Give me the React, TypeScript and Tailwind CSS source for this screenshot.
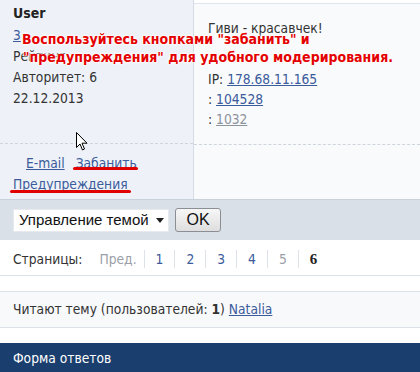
import React from "react";

const font = "font-['DejaVu_Sans_Condensed','DejaVu_Sans',sans-serif]";

const pages = ["1", "2", "3", "4", "5"];

const Cursor = () => (
  <svg width="12" height="19" viewBox="0 0 12 19" className="absolute left-[76px] top-[132px]">
    <path
      d="M0.5 0.5 L0.5 15.5 L4 12 L6.5 18 L8.5 17 L6 11.2 L11 11.2 Z"
      fill="#fff"
      stroke="#000"
      strokeWidth="1"
    />
  </svg>
);

const App = () => {
  return (
    <div className={`relative w-[420px] h-[372px] overflow-hidden bg-white text-[13.7px] text-[#333] ${font}`}>
      {/* post */}
      <div className="flex h-[200px] border-b border-[#c9d1db]">
        <div className="w-[194px] bg-[#eef2f8] border-r border-[#d5dce5] flex flex-col">
          <div className="h-[143px] px-[13px] pt-[3px] flex flex-col">
            <div className="font-bold text-[14px] leading-[20px] text-[#222]">User</div>
            <div className="leading-[21px] mt-[2px]">
              <a className="text-[#3b5b9b] underline">3</a>
            </div>
            <div className="leading-[21px]">Рейтинг</div>
            <div className="leading-[21px]">Авторитет: 6</div>
            <div className="leading-[21px]">22.12.2013</div>
          </div>
          <div className="border-t border-dashed border-[#cfd5dd] pt-[9px] px-[13px] leading-[21px]">
            <div className="pl-[13px] flex gap-[11px]">
              <a className="text-[#3b5b9b] underline">E-mail</a>
              <a className="relative text-[#3b5b9b] underline">
                Забанить
                <span className="absolute left-[-3px] right-[-1px] top-[14px] h-[3px] rounded-full bg-[#e00000]" />
              </a>
            </div>
            <a className="relative text-[#3b5b9b] underline">
              Предупреждения
              <span className="absolute left-[-3px] right-[-3px] top-[14px] h-[3px] rounded-full bg-[#e00000]" />
            </a>
          </div>
        </div>
        <div className="flex-1 flex flex-col pt-[3px]">
          <div className="flex-1 flex flex-col bg-[#f9fafc] border-t border-[#e1e6ec]">
            <div className="h-[140px] pl-[14px] pt-[14px] leading-[20px]">
              <div>Гиви - красавчек!</div>
              <div className="h-[31px]" />
              <div>
                IP: <a className="text-[#3b5b9b] underline">178.68.11.165</a>
              </div>
              <div>
                : <a className="text-[#3b5b9b] underline">104528</a>
              </div>
              <div>
                : <a className="text-[#8d939c] underline">1032</a>
              </div>
            </div>
            <div className="flex-1 border-t border-dashed border-[#cfd5dd]" />
          </div>
        </div>
      </div>

      {/* moderation bar */}
      <div className="h-[40px] bg-[#d9e0e8] flex items-center gap-[6px] px-[13px] font-['Liberation_Sans',Arial,sans-serif]">
        <div className="w-[156px] h-[23px] bg-white border border-[#e6e9ed] flex items-center pl-[5px] pr-[4px] text-[15px] text-[#111]">
          <span className="flex-1">Управление темой</span>
          <svg width="8" height="5" viewBox="0 0 8 5">
            <path d="M0 0 H8 L4 5 Z" fill="#222" />
          </svg>
        </div>
        <button className="w-[46px] h-[24px] rounded-[3px] border border-[#8b8f95] bg-gradient-to-b from-[#f7f7f7] to-[#dedede] text-[16px] text-[#111] leading-none">
          OK
        </button>
      </div>

      {/* pages */}
      <div className="h-[36px] border-b border-[#dde2e8] flex items-center pl-[13px] pt-[3px]">
        <span className="mr-[17px]">Страницы:</span>
        <span className="text-[#9aa0a8] pr-[7px]">Пред.</span>
        {pages.map((p) => (
          <span
            key={p}
            className={`border-l border-[#dde2e8] h-[18px] flex items-center px-[11px] ${p === "5" ? "text-[#9aa0a8]" : "text-[#3b5b9b]"}`}
          >
            {p}
          </span>
        ))}
        <span className="border-l border-[#dde2e8] h-[18px] flex items-center px-[11px] font-bold text-[#222] font-['Liberation_Serif',serif] text-[15px]">
          6
        </span>
      </div>

      <div className="h-[15px]" />

      {/* readers */}
      <div className="h-[37px] bg-[#f8f9fb] border-y border-[#dde2e8] flex items-center px-[13px]">
        <span>
          Читают тему (пользователей: <b>1</b>){" "}
          <a className="text-[#3b5b9b] underline">Natalia</a>
        </span>
      </div>

      <div className="h-[15px]" />

      <div className="h-[30px] bg-[#1a3e6d] text-white flex items-center px-[13px]">
        Форма ответов
      </div>

      {/* annotation */}
      <div className="absolute left-[22px] top-[30px] whitespace-nowrap font-bold text-[14px] leading-[18px] text-[#e40000] [text-shadow:0_0_3px_#fff,0_0_3px_#fff,0_0_2px_#fff,0_0_1px_#fff] font-['DejaVu_Sans_Condensed','DejaVu_Sans',sans-serif]">
        <div>Воспользуйтесь кнопками "забанить" и</div>
        <div className="pl-[1px]">"предупреждения" для удобного модерирования.</div>
      </div>

      <Cursor />
    </div>
  );
};

export default App;
